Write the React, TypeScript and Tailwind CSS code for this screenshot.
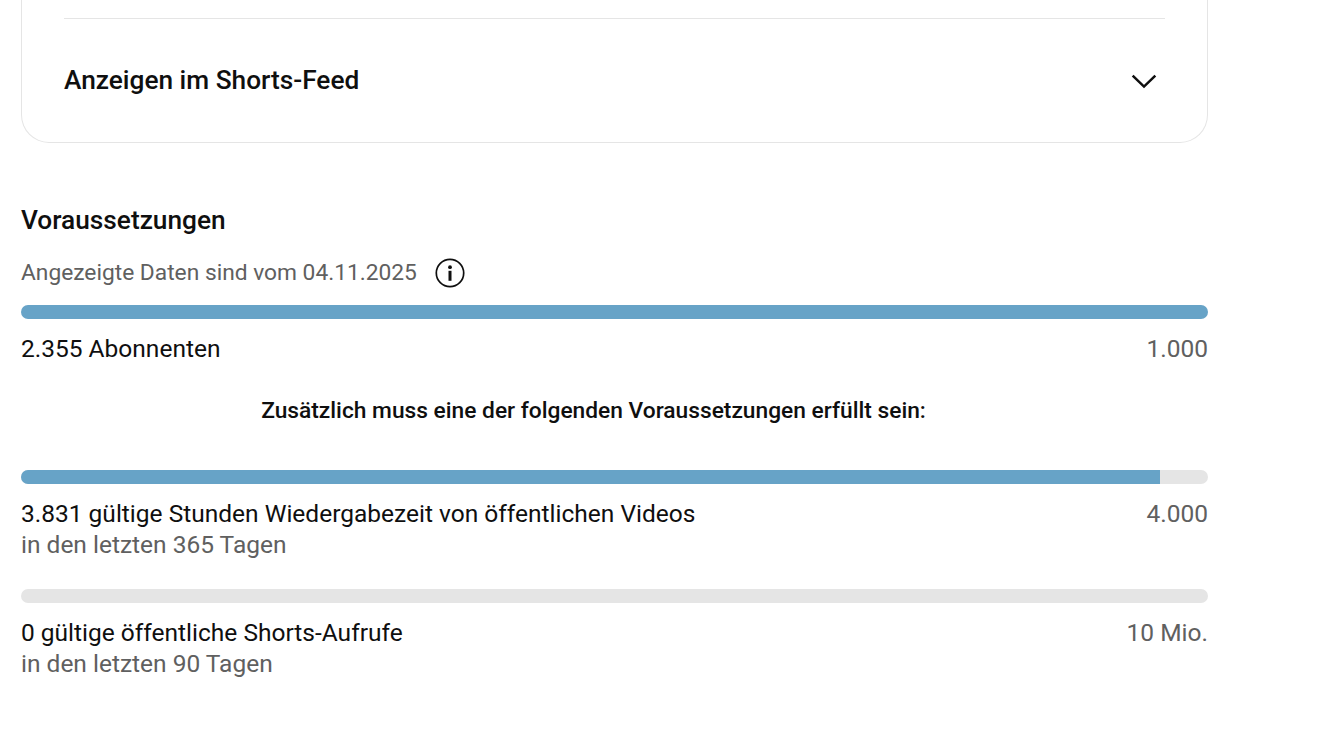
const ROBOTO = "font-['Roboto',sans-serif]";

function Bar({ percent }: { percent: number }) {
  return (
    <div className="h-[14px] w-full rounded-[7px] bg-[#e5e5e5] overflow-hidden">
      <div className="h-full bg-[#67a3c7]" style={{ width: `${percent}%` }} />
    </div>
  );
}

function Requirement({ label, target, note }: { label: string; target: string; note?: string }) {
  return (
    <div className="mt-[14px]">
      <div className="flex justify-between text-[24.5px] leading-[31px]">
        <span className="text-[#0f0f0f]">{label}</span>
        <span className="text-[#606060]">{target}</span>
      </div>
      {note && <div className="text-[24.5px] leading-[31px] text-[#606060]">{note}</div>}
    </div>
  );
}

export default function App() {
  return (
    <div className={`${ROBOTO} h-[737px] w-[1338px] overflow-hidden bg-white pl-[21px]`}>
      <div className="w-[1187px]">
        {/* card is cut off by the top of the window */}
        <section className="h-[143px] rounded-b-[28px] border border-t-0 border-[#e5e5e5] px-[42px] pt-[18px]">
          <div className="h-px w-full bg-[#e5e5e5]" />
          <div className="mt-[44px] flex items-center justify-between">
            <h2 className="text-[26.25px] font-medium leading-[34px] text-[#0f0f0f]">Anzeigen im Shorts-Feed</h2>
            <svg viewBox="0 0 24 24" className="mr-[5px] h-[32px] w-[32px] translate-y-px" fill="none" stroke="#0f0f0f" strokeWidth="1.9">
              <path d="M3.5 8 12 16.2 20.5 8" />
            </svg>
          </div>
        </section>

        <h2 className="mt-[60px] text-[26.25px] font-medium leading-[34px] text-[#0f0f0f]">Voraussetzungen</h2>
        <div className="mt-[21px] flex items-center text-[#606060]">
          <span className="text-[22.75px] leading-[30px]">Angezeigte Daten sind vom 04.11.2025</span>
          <svg viewBox="0 0 30 30" className="ml-[18px] h-[30px] w-[30px]" fill="none">
            <circle cx="15" cy="15" r="13.7" stroke="#0f0f0f" strokeWidth="1.7" />
            <circle cx="15" cy="9.2" r="1.9" fill="#0f0f0f" />
            <rect x="13.5" y="12.8" width="3" height="10" fill="#0f0f0f" />
          </svg>
        </div>

        <div className="mt-[17px]">
          <Bar percent={100} />
        </div>
        <Requirement label="2.355 Abonnenten" target="1.000" />

        <p className="mt-[31px] pr-[42px] text-center text-[22.75px] font-medium leading-[32px] text-[#0f0f0f]">
          Zusätzlich muss eine der folgenden Voraussetzungen erfüllt sein:
        </p>

        <div className="mt-[43px]">
          <Bar percent={95.95} />
        </div>
        <Requirement
          label="3.831 gültige Stunden Wiedergabezeit von öffentlichen Videos"
          target="4.000"
          note="in den letzten 365 Tagen"
        />

        <div className="mt-[29px]">
          <Bar percent={0} />
        </div>
        <Requirement label="0 gültige öffentliche Shorts-Aufrufe" target="10 Mio." note="in den letzten 90 Tagen" />
      </div>
    </div>
  );
}
